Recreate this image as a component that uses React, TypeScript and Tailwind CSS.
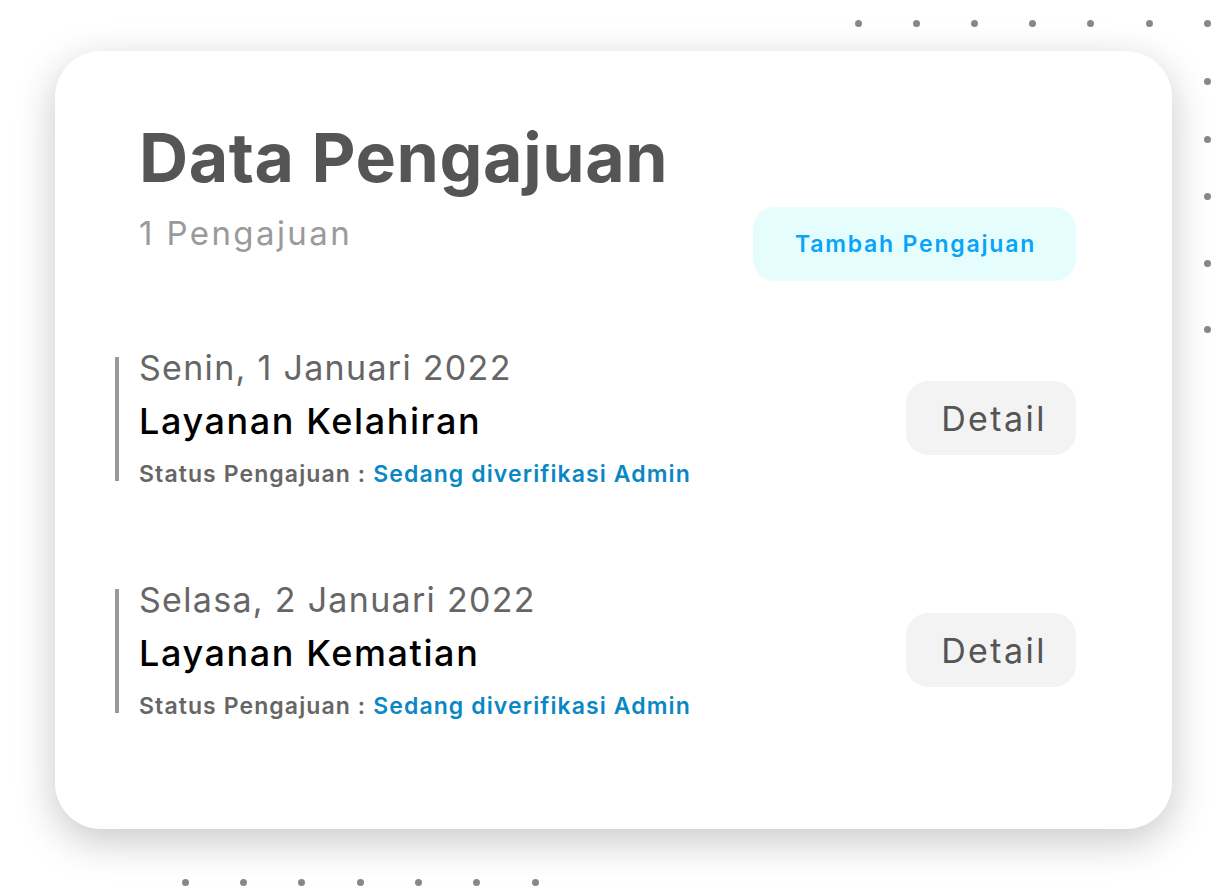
import React from "react";

const topDots = [858, 916, 974, 1032, 1090, 1149, 1207];
const rightDots = [81, 139, 196, 263, 329];
const bottomDots = [185, 243, 301, 360, 418, 476, 535];

function Item({ date, title }: { date: string; title: string }) {
  return (
    <div className="flex items-center justify-between pl-[60px] pr-[96px]">
      <div className="flex">
        <div className="w-[4px] bg-[#9a9a9a] mt-[9px] mb-[7px]" />
        <div className="pl-[20px] flex flex-col">
          <div className="text-[34px] leading-[40px] tracking-[1.3px] text-[#666666]">{date}</div>
          <div className="text-[36px] leading-[42px] tracking-[1.6px] mt-[12px] font-medium text-black">{title}</div>
          <div className="text-[23px] leading-[28px] tracking-[1.1px] mt-[18px] font-semibold text-[#666666]">
            Status Pengajuan : <span className="text-[#0a88c4]">Sedang diverifikasi Admin</span>
          </div>
        </div>
      </div>
      <button className="w-[170px] h-[74px] rounded-[22px] bg-[#f3f3f3] text-[34px] tracking-[2.4px] pl-[6px] text-[#555555]">
        Detail
      </button>
    </div>
  );
}

export default function App() {
  return (
    <div
      className="relative w-[1227px] h-[888px] bg-white overflow-hidden"
      style={{ fontFamily: "Inter, 'Noto Sans', sans-serif" }}
    >
      {topDots.map((x) => (
        <div key={"t" + x} className="absolute w-[7px] h-[7px] rounded-full bg-[#888888]" style={{ left: x - 3.5, top: 19.5 }} />
      ))}
      {rightDots.map((y) => (
        <div key={"r" + y} className="absolute w-[7px] h-[7px] rounded-full bg-[#888888]" style={{ left: 1203.5, top: y - 3.5 }} />
      ))}
      {bottomDots.map((x) => (
        <div key={"b" + x} className="absolute w-[7px] h-[7px] rounded-full bg-[#888888]" style={{ left: x - 3.5, top: 878.5 }} />
      ))}
      <div className="relative ml-[55px] mt-[51px] w-[1117px] h-[778px] rounded-[46px] bg-white shadow-[0_12px_40px_rgba(0,0,0,0.22)]">
        <div className="pl-[84px] pr-[96px] pt-[66px] flex items-start justify-between">
          <div>
            <h1 className="text-[68px] leading-[80px] font-bold text-[#555555] tracking-[0.6px]">Data Pengajuan</h1>
            <div className="text-[33px] leading-[40px] tracking-[2.4px] text-[#9a9a9a] mt-[16px]">1 Pengajuan</div>
          </div>
          <button className="w-[323px] h-[74px] mt-[90px] rounded-[22px] bg-[#e6fdfd] text-[23px] tracking-[1.8px] pl-[2px] font-semibold text-[#08a4f8]">
            Tambah Pengajuan
          </button>
        </div>
        <div className="mt-[67px] flex flex-col gap-[92px]">
          <Item date="Senin, 1 Januari 2022" title="Layanan Kelahiran" />
          <Item date="Selasa, 2 Januari 2022" title="Layanan Kematian" />
        </div>
      </div>
    </div>
  );
}
